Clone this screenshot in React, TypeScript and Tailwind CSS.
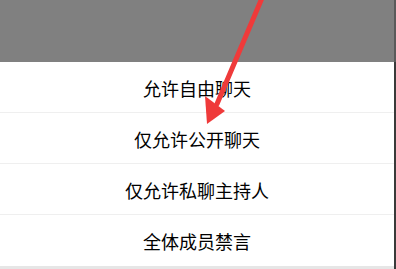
const options = ["允许自由聊天", "仅允许公开聊天", "仅允许私聊主持人", "全体成员禁言"];

function Arrow() {
  return (
    <svg
      className="absolute left-0 top-0 pointer-events-none"
      width="396"
      height="269"
      viewBox="0 0 396 269"
    >
      <line x1="262" y1="-2" x2="217" y2="104" stroke="#ef3a3a" strokeWidth="5" strokeLinecap="round" />
      <polygon points="205,96 225,111 207,124" fill="#ef3a3a" />
    </svg>
  );
}

export default function App() {
  return (
    <div
      className="relative w-[396px] h-[269px] overflow-hidden flex bg-white"
      style={{ fontFamily: '"Noto Sans CJK SC", "Noto Sans", sans-serif' }}
    >
      <div className="flex-1 flex flex-col">
        <div className="h-[62px] bg-[#808080]" />
        {options.map((label, i) => (
          <div
            key={label}
            className={
              "h-[51px] flex items-center justify-center pt-[2px] text-[18px] text-black bg-white " +
              (i < options.length - 1 ? "border-b border-[#efefef]" : "")
            }
          >
            {label}
          </div>
        ))}
        <div className="flex-1 bg-[#e6e6e6]" />
      </div>
      <div className="w-[2px] flex flex-col">
        <div className="h-[62px] bg-[#5a5a5a]" />
        <div className="flex-1 bg-[#3a3a3a]" />
      </div>
      <Arrow />
    </div>
  );
}
